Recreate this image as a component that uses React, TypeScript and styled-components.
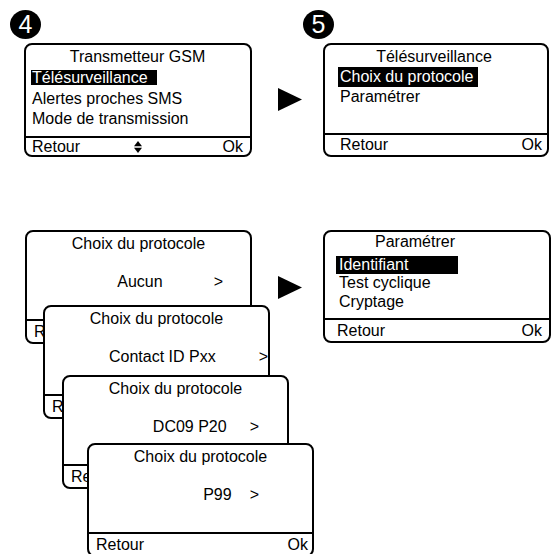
import React from 'react'
import styled, { createGlobalStyle } from 'styled-components'

const GlobalStyle = createGlobalStyle`
  * {
    box-sizing: border-box;
  }

  body {
    margin: 0;
    background: #fff;
    color: #000;
    font-family: "Liberation Sans", Arial, sans-serif;
  }
`

const Page = styled.div`
  width: 554px;
  height: 554px;
  overflow: hidden;
  background: #fff;
  font-size: 16px;
`

const TopRow = styled.div`
  display: flex;
  align-items: flex-start;
  padding: 10px 0 0 10px;
`

const BottomRow = styled.div`
  display: flex;
  align-items: flex-start;
  margin-top: 73px;
  padding-left: 25px;
`

const Step = styled.div<{ $ml?: number }>`
  display: flex;
  flex-direction: column;
  align-items: flex-start;
  flex-shrink: 0;
  margin-left: ${(p) => p.$ml ?? 0}px;
`

const Badge = styled.div`
  width: 31px;
  height: 29px;
  border-radius: 50%;
  background: #000;
  color: #fff;
  display: flex;
  align-items: center;
  justify-content: center;
  font-size: 25px;
  line-height: 1;
`

const Arrow = styled.svg<{ $ml: number; $mt: number }>`
  display: block;
  flex-shrink: 0;
  margin-left: ${(p) => p.$ml}px;
  margin-top: ${(p) => p.$mt}px;
`

const Stack = styled.div`
  display: flex;
  flex-direction: column;
  align-items: flex-start;
  width: 227px;
  flex-shrink: 0;
`

const Screen = styled.div<{ $w: number; $h: number; $ml?: number; $mt?: number }>`
  position: relative;
  flex-shrink: 0;
  width: ${(p) => p.$w}px;
  height: ${(p) => p.$h}px;
  margin-left: ${(p) => p.$ml ?? 0}px;
  margin-top: ${(p) => p.$mt ?? 0}px;
  border: 2px solid #000;
  border-radius: 8px;
  background: #fff;
  display: flex;
  flex-direction: column;
  overflow: hidden;
`

const Body = styled.div<{ $pt: number; $pl?: number }>`
  flex: 1;
  padding-top: ${(p) => p.$pt}px;
  padding-left: ${(p) => p.$pl ?? 0}px;
`

const Title = styled.div<{ $lh: number; $shift?: number; $mb?: number }>`
  text-align: center;
  line-height: ${(p) => p.$lh}px;
  height: ${(p) => p.$lh}px;
  padding-right: ${(p) => p.$shift ?? 0}px;
  margin-bottom: ${(p) => p.$mb ?? 0}px;
  white-space: nowrap;
`

const Item = styled.div<{ $lh: number }>`
  height: ${(p) => p.$lh}px;
  display: flex;
  align-items: center;
`

const Mark = styled.span<{ $on?: boolean; $w: number; $h: number; $pl: number }>`
  display: inline-block;
  height: ${(p) => p.$h}px;
  line-height: ${(p) => p.$h}px;
  width: ${(p) => (p.$on ? `${p.$w}px` : 'auto')};
  padding-left: ${(p) => p.$pl}px;
  background: ${(p) => (p.$on ? '#000' : 'transparent')};
  color: ${(p) => (p.$on ? '#fff' : '#000')};
  white-space: nowrap;
`

const ValueRow = styled.div<{ $gap: number; $pr: number }>`
  display: flex;
  justify-content: flex-end;
  align-items: center;
  gap: ${(p) => p.$gap}px;
  height: 20px;
  margin-top: 18px;
  padding-right: ${(p) => p.$pr}px;
  white-space: nowrap;
`

const FooterBar = styled.div<{ $h: number; $pl: number; $pr: number }>`
  flex-shrink: 0;
  height: ${(p) => p.$h}px;
  border-top: 2px solid #000;
  display: grid;
  grid-template-columns: 1fr auto 1fr;
  align-items: center;
  padding: 0 ${(p) => p.$pr}px 0 ${(p) => p.$pl}px;
  line-height: 1;
  white-space: nowrap;
`

const FooterEnd = styled.span`
  justify-self: end;
`

const UpDown = styled.svg`
  display: block;
  margin-top: 1px;
`

const Footer = ({ h, pl, pr, nav }: { h: number; pl: number; pr: number; nav?: boolean }) => (
  <FooterBar $h={h} $pl={pl} $pr={pr}>
    <span>Retour</span>
    {nav ? (
      <UpDown width="8" height="12" viewBox="0 0 8 12">
        <polygon points="0,5.3 4,0 8,5.3" fill="#000" />
        <polygon points="0,6.7 4,12 8,6.7" fill="#000" />
      </UpDown>
    ) : (
      <span />
    )}
    <FooterEnd>Ok</FooterEnd>
  </FooterBar>
)

const Play = ({ ml, mt }: { ml: number; mt: number }) => (
  <Arrow $ml={ml} $mt={mt} width="24" height="23" viewBox="0 0 24 23">
    <polygon points="0,0 24,11.5 0,23" fill="#000" />
  </Arrow>
)

const protocols = [
  { value: 'Aucun', ml: 0, mt: 0, gap: 51, pr: 27 },
  { value: 'Contact ID Pxx', ml: 18, mt: -39, gap: 43, pr: 0 },
  { value: 'DC09 P20', ml: 37, mt: -44, gap: 23, pr: 28 },
  { value: 'P99', ml: 62, mt: -46, gap: 18, pr: 53 },
]

const App = () => {
  return (
    <>
      <GlobalStyle />
      <Page>
        <TopRow>
          <Step>
            <Badge>4</Badge>
            <Screen $w={228} $h={114} $ml={14} $mt={4}>
              <Body $pt={2} $pl={5}>
                <Title $lh={20.5} $shift={6}>Transmetteur GSM</Title>
                <Item $lh={20.5}>
                  <Mark $on $w={126} $h={15} $pl={1}>Télésurveillance</Mark>
                </Item>
                <Item $lh={20.5}>
                  <Mark $w={126} $h={15} $pl={1}>Alertes proches SMS</Mark>
                </Item>
                <Item $lh={20.5}>
                  <Mark $w={126} $h={15} $pl={1}>Mode de transmission</Mark>
                </Item>
              </Body>
              <Footer h={19} pl={6} pr={7} nav />
            </Screen>
          </Step>
          <Play ml={26} mt={78} />
          <Step $ml={1}>
            <Badge>5</Badge>
            <Screen $w={226} $h={114} $ml={20} $mt={4}>
              <Body $pt={2} $pl={13}>
                <Title $lh={20} $shift={17}>Télésurveillance</Title>
                <Item $lh={20}>
                  <Mark $on $w={140} $h={20} $pl={2}>Choix du protocole</Mark>
                </Item>
                <Item $lh={20}>
                  <Mark $w={140} $h={20} $pl={2}>Paramétrer</Mark>
                </Item>
              </Body>
              <Footer h={22} pl={15} pr={5} />
            </Screen>
          </Step>
        </TopRow>
        <BottomRow>
          <Stack>
            {protocols.map((p) => (
              <Screen key={p.value} $w={227} $h={114} $ml={p.ml} $mt={p.mt}>
                <Body $pt={2}>
                  <Title $lh={20}>Choix du protocole</Title>
                  <ValueRow $gap={p.gap} $pr={p.pr}>
                    <span>{p.value}</span>
                    <span>&gt;</span>
                  </ValueRow>
                </Body>
                <Footer h={23} pl={7} pr={4} />
              </Screen>
            ))}
          </Stack>
          <Play ml={26} mt={46} />
          <Screen $w={228} $h={113} $ml={21}>
            <Body $pt={1} $pl={11}>
              <Title $lh={18.5} $shift={55} $mb={4}>Paramétrer</Title>
              <Item $lh={18.5}>
                <Mark $on $w={122} $h={18} $pl={3}>Identifiant</Mark>
              </Item>
              <Item $lh={18.5}>
                <Mark $w={122} $h={18} $pl={3}>Test cyclique</Mark>
              </Item>
              <Item $lh={18.5}>
                <Mark $w={122} $h={18} $pl={3}>Cryptage</Mark>
              </Item>
            </Body>
            <Footer h={23} pl={12} pr={7} />
          </Screen>
        </BottomRow>
      </Page>
    </>
  )
}

export default App
